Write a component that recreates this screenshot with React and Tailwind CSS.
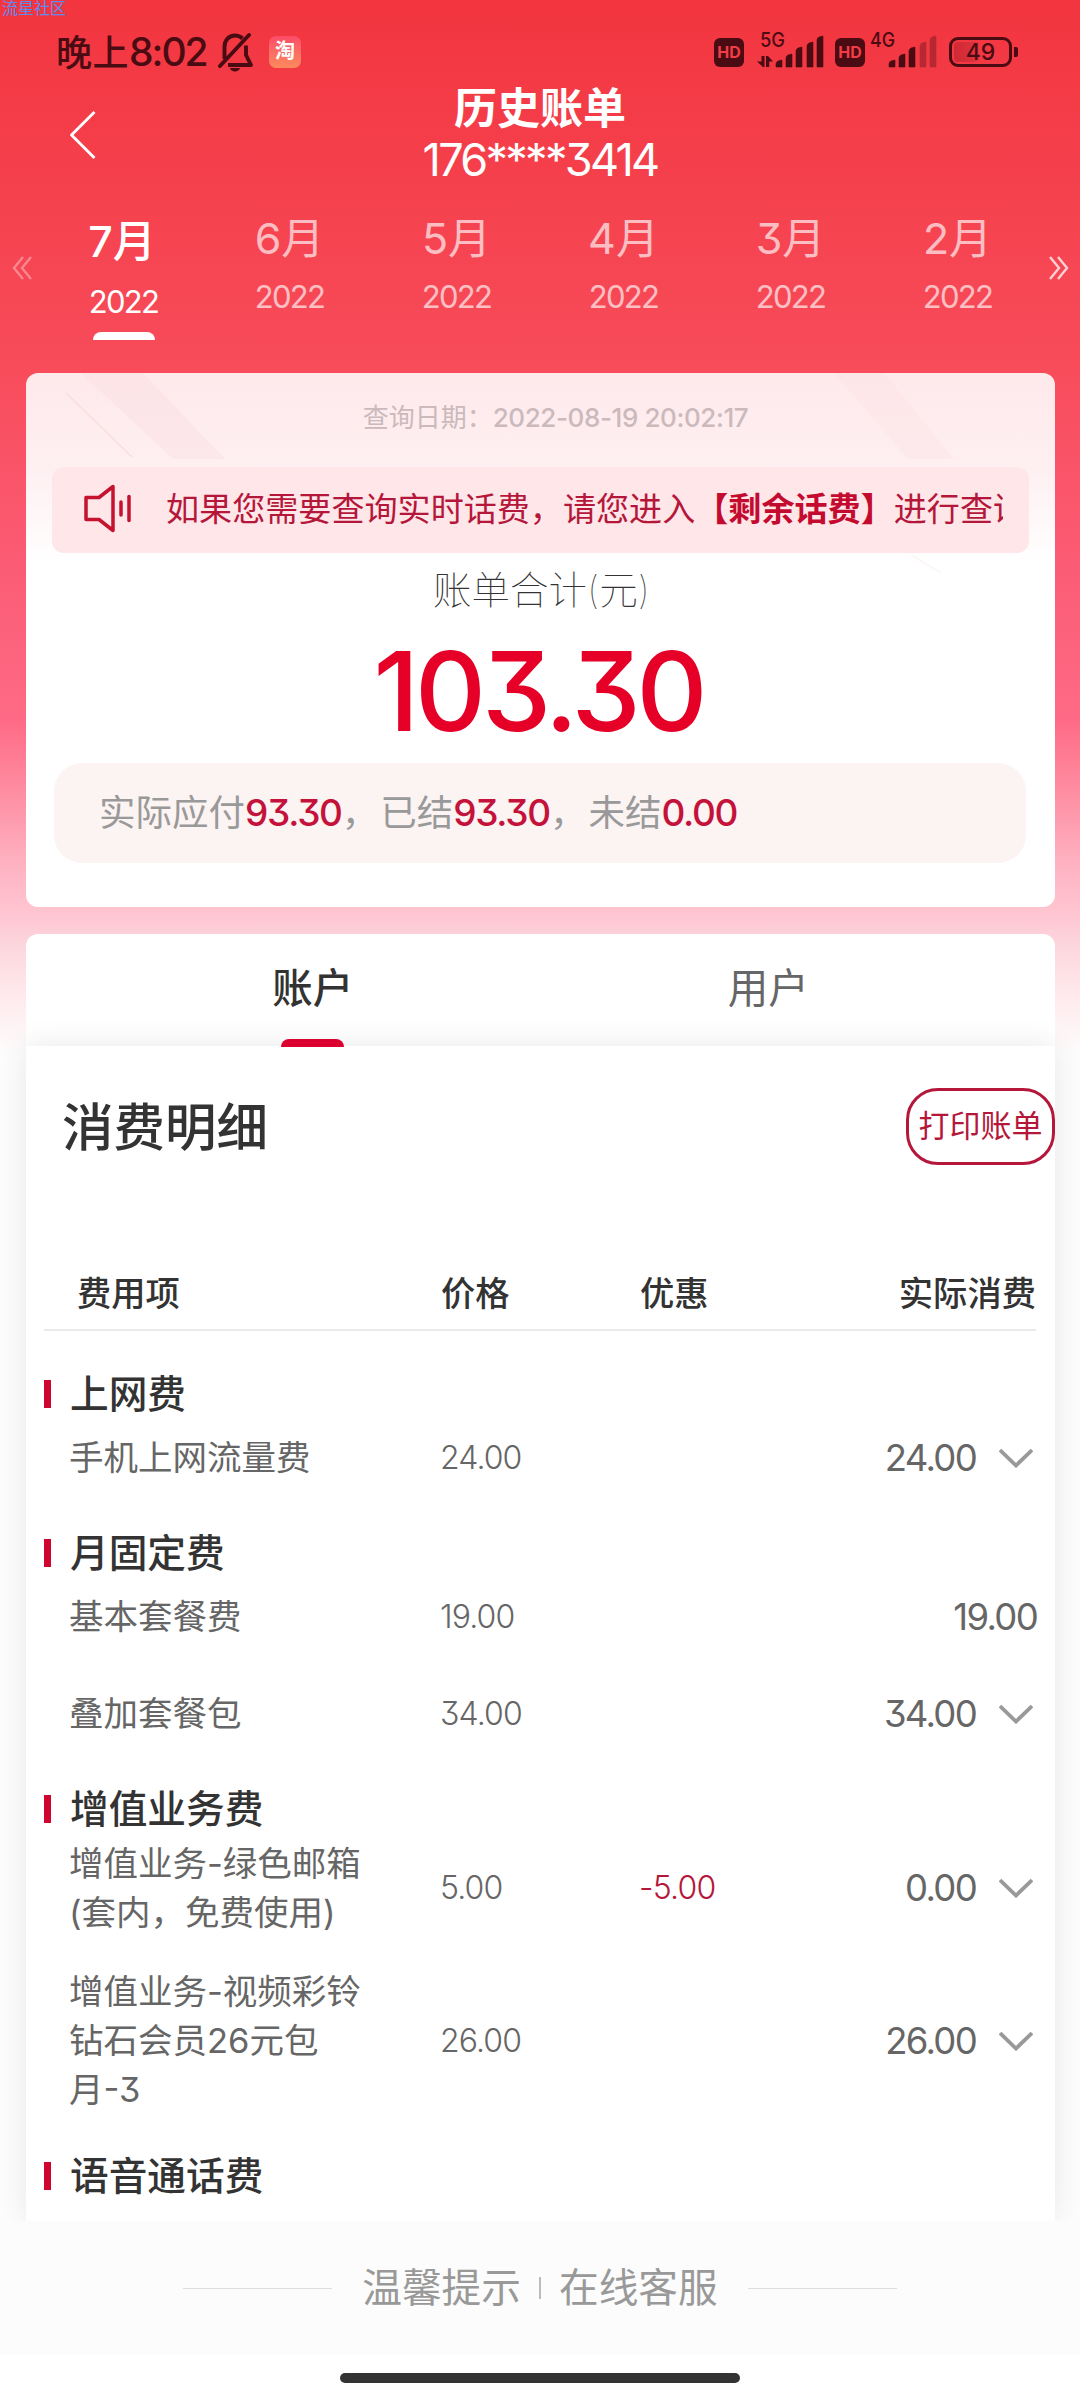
import { ChevronLeft } from 'lucide-react';

const months = [
    { month: '7月', year: '2022', active: true },
    { month: '6月', year: '2022' },
    { month: '5月', year: '2022' },
    { month: '4月', year: '2022' },
    { month: '3月', year: '2022' },
    { month: '2月', year: '2022' },
];

const sections = [
    {
        title: '上网费',
        items: [{ name: ['手机上网流量费'], price: '24.00', actual: '24.00', expandable: true }],
    },
    {
        title: '月固定费',
        items: [
            { name: ['基本套餐费'], price: '19.00', actual: '19.00' },
            { name: ['叠加套餐包'], price: '34.00', actual: '34.00', expandable: true },
        ],
    },
    {
        title: '增值业务费',
        items: [
            { name: ['增值业务-绿色邮箱', '(套内，免费使用)'], price: '5.00', discount: '-5.00', actual: '0.00', expandable: true },
            { name: ['增值业务-视频彩铃', '钻石会员26元包', '月-3'], price: '26.00', actual: '26.00', expandable: true },
        ],
    },
    { title: '语音通话费', items: [] },
];

function HdBadge() {
    return (
        <div className="w-[30px] h-[29px] rounded-[6px] bg-[#4a0b12] text-[#f23c46] text-[16px] font-bold leading-[29px] text-center">
            HD
        </div>
    );
}

function Signal({ label, level, arrows }) {
    const bars = [
        { x: 19, h: 7 },
        { x: 29, h: 13 },
        { x: 39, h: 20 },
        { x: 50, h: 25 },
        { x: 60, h: 31 },
    ];

    return (
        <svg className="w-[68px] h-[40px]" viewBox="0 0 68 40">
            <text x={arrows ? 3 : 0} y="19" fontSize="20" fontWeight="500" fill="#4a0b12" textLength="25" lengthAdjust="spacingAndGlyphs">
                {label}
            </text>
            {arrows && (
                <g fill="#4a0b12">
                    <path d="M4.5 28h3v11h-1.500L0 33.500h4.500z" />
                    <path d="M9 28h2l5 5.500h-3.800v5.500H9z" />
                </g>
            )}
            {bars.map((bar, i) => (
                <path
                    key={bar.x}
                    transform={`translate(${bar.x} 39)`}
                    d={`M0 0V-${bar.h - 4}Q0-${bar.h - 2} 2-${bar.h - 1}L6-${bar.h}V0Z`}
                    fill="#4a0b12"
                    stroke="#4a0b12"
                    strokeWidth="0.6"
                    strokeLinejoin="round"
                    opacity={i < level ? 1 : 0.35}
                />
            ))}
        </svg>
    );
}

function StatusBar() {
    return (
        <div className="h-[80px] pt-[32px] pl-[56px] flex items-start text-[#4a0b12]">
            <div className="h-[40px] w-[162px] whitespace-nowrap leading-[40px] font-medium">
                <span className="text-[36px] tracking-[0.500px]">晚上</span>
                <span className="text-[39px] tracking-[-2px]">8:02</span>
            </div>
            <svg className="w-[36px] h-[40px]" viewBox="0 0 36 40" fill="none" stroke="#4a0b12" strokeWidth="3.9">
                <path d="M2 34L31 3" strokeLinecap="round" />
                <path d="M6.500 27V15C6.500 8 11 3.500 17 3.500C20 3.500 22.500 4.500 24.500 6.500" />
                <path d="M28 13.500V23L33 33H10" strokeLinejoin="round" />
                <path d="M12 36h10c-.5 2-2.500 3.500-5 3.500s-4.500-1.500-5-3.500z" fill="#4a0b12" stroke="none" />
            </svg>
            <div className="mt-[4px] ml-[15px] w-[32px] h-[32px] rounded-[7px] bg-linear-to-b from-[#fb4a69] to-[#fc8a5c] text-white text-[20px] font-bold leading-[31px] text-center">
                淘
            </div>
            <div className="ml-auto mr-[62px] flex items-start">
                <div className="mt-[6px]"><HdBadge /></div>
                <div className="ml-[13px] -mt-[4px] flex"><Signal label="5G" level={5} arrows /></div>
                <div className="ml-[10px] mt-[6px]"><HdBadge /></div>
                <div className="ml-[5px] -mt-[4px] flex"><Signal label="4G" level={3} /></div>
                <div className="ml-[11px] mt-[5px] flex items-center">
                    <div className="w-[63px] h-[30px] p-[2px] border-[3px] border-[#4a0b12] rounded-[9px]">
                        <div className="h-[20px] rounded-[4px] bg-linear-to-r from-[#cf2a35] via-[#dc313c] via-35% to-transparent to-50% text-[23px] font-medium leading-[20px] text-center">
                            49
                        </div>
                    </div>
                    <div className="ml-[2px] w-[4px] h-[10px] rounded-r-[2px] bg-[#4a0b12]"></div>
                </div>
            </div>
        </div>
    );
}

function Header() {
    return (
        <div className="h-[120px] pt-[6px] text-white text-center relative">
            <ChevronLeft className="absolute left-[36px] top-[9px] w-[94px] h-[92px]" strokeWidth={0.75} strokeLinecap="butt" />
            <div className="h-[44px] text-[43px] leading-[44px] font-semibold">历史账单</div>
            <div className="h-[58px] text-[45px] leading-[60px] tracking-[-2.700px]">176****3414</div>
        </div>
    );
}

function DoubleChevron({ className }) {
    return (
        <svg className={className} viewBox="0 0 21 24" fill="none" stroke="currentColor" strokeWidth="2.4">
            <path d="M11 1L2 12l9 11M19 1l-9 11 9 11" />
        </svg>
    );
}

function MonthTabs() {
    return (
        <div className="h-[173px] flex text-white">
            <DoubleChevron className="w-[21px] h-[24px] mt-[56px] ml-[12px] mr-[7px] opacity-35" />
            {months.map((m) =>
                m.active ? (
                    <div key={m.month} className="w-[167px] flex flex-col items-center">
                        <div className="mt-[15px] -ml-[3px] text-[43px] leading-[52px] font-medium">{m.month}</div>
                        <div className="mt-[15px] text-[31px] leading-[40px] tracking-[-1.700px]">{m.year}</div>
                        <div className="mt-[10px] w-[62px] h-[8px] rounded-t-[8px] bg-white"></div>
                    </div>
                ) : (
                    <div key={m.month} className="w-[167px] flex flex-col items-center opacity-65">
                        <div className="mt-[12px] -ml-[2px] text-[43px] leading-[52px]">{m.month}</div>
                        <div className="mt-[13px] -ml-[2px] text-[31px] leading-[40px] tracking-[-1.700px]">{m.year}</div>
                    </div>
                )
            )}
            <DoubleChevron className="w-[21px] h-[24px] mt-[56px] ml-[6px] rotate-180 opacity-75" />
        </div>
    );
}

function SummaryCard() {
    return (
        <div className="ml-[26px] mr-[25px] h-[534px] rounded-[12px] bg-linear-to-b from-[#fee9eb] via-[#feeff1] via-17% to-white to-36% relative overflow-hidden">
            <svg className="absolute left-0 top-0 w-[1028px] h-[220px]" viewBox="0 0 1028 220">
                <path d="M55 0h62l82 86h-52z" fill="#fbdde1" opacity="0.4" />
                <path d="M40 20l66 64" stroke="#fadde0" strokeWidth="1.5" />
                <path d="M808 0h50l70 86h-46z" fill="#fbdde1" opacity="0.28" />
                <path d="M885 182l30 18" stroke="#fdf6f6" strokeWidth="2" />
            </svg>
            <div className="relative">
                <div className="pt-[22px] pl-[30px] text-[26px] leading-[46px] text-center text-[#cbb9bc] whitespace-nowrap">
                    查询日期：<span className="text-[26px] font-medium tracking-[-0.400px]">2022-08-19 20:02:17</span>
                </div>
                <div className="mt-[26px] mx-[26px] h-[86px] rounded-[12px] bg-[#fee6e9] flex items-center pr-[26px]">
                    <svg className="w-[50px] h-[50px] ml-[31px] -mt-[4px] flex-shrink-0" viewBox="0 0 50 50" fill="none" stroke="#c4122f" strokeWidth="3.500" strokeLinejoin="round" strokeLinecap="round">
                        <path d="M3 14.500h13L30 3.500v44L16 36.500H3z" />
                        <path d="M38 19v13" />
                        <path d="M46 13.500v24" />
                    </svg>
                    <div className="ml-[33px] -mt-[3px] flex-1 overflow-hidden whitespace-nowrap text-[33.100px] leading-[60px] text-[#b5173a]">
                        如果您需要查询实时话费，请您进入<b className="text-[#c40a2f]">【剩余话费】</b>进行查询
                    </div>
                </div>
                <div className="mt-[14px] pl-[2px] text-center text-[38.500px] leading-[46px] font-thin text-[#333]">账单合计(元)</div>
                <div className="mt-[18px] pr-[4px] text-center text-[110px] leading-[120px] font-medium text-[#e60027] tracking-[-4px]">103.30</div>
                <div className="mt-[12px] ml-[28px] mr-[29px] h-[100px] rounded-[28px] bg-[#fcf3f3] pl-[45px] text-[36.500px] leading-[99px] text-[#999] whitespace-nowrap">
                    实际应付<Amount value="93.30" />，<span className="ml-[2px]">已结</span><Amount value="93.30" />，<span className="ml-[2px]">未结</span><Amount value="0.00" />
                </div>
            </div>
        </div>
    );
}

function Amount({ value }) {
    return <span className="text-[37px] font-medium tracking-[-1.300px] text-[#c4123a]">{value}</span>;
}

function AccountTabs() {
    return (
        <div className="ml-[26px] mr-[25px] mt-[27px] h-[112px] rounded-t-[12px] bg-white px-[59px] flex text-[40.500px] leading-[56px] text-center">
            <div className="flex-1 pt-[27px] font-medium text-[#333] flex flex-col items-center">
                账户
                <div className="relative z-10 mt-[22px] w-[63px] h-[8px] flex-shrink-0 rounded-t-[8px] bg-[#dc0030]"></div>
            </div>
            <div className="flex-1 pt-[27px] text-[#666]">用户</div>
        </div>
    );
}

function FeeRow({ item }) {
    return (
        <div className="min-h-[97px] py-[15px] flex items-center text-[#666]">
            <div className="w-[371px] text-[34.500px] leading-[49px] whitespace-nowrap">
                {item.name.map((line) => (
                    <div key={line}>{line}</div>
                ))}
            </div>
            <div className="w-[199px] text-[32px] leading-[40px] font-light tracking-[-0.900px]">{item.price}</div>
            <div className="w-[200px] text-[32px] leading-[40px] font-light tracking-[-0.800px] text-[#b5173a]">{item.discount}</div>
            <div className="flex-1 flex justify-end items-center text-[36.500px] leading-[40px] tracking-[-1.700px]">
                <span>{item.actual}</span>
                {item.expandable && (
                    <svg className="w-[34px] h-[20px] ml-[23px] mr-[4px]" viewBox="0 0 34 20" fill="none" stroke="#999" strokeWidth="3.800">
                        <path d="M1 2l16 15.500L33 2" />
                    </svg>
                )}
            </div>
        </div>
    );
}

function Details() {
    return (
        <div className="ml-[26px] mr-[25px] h-[1175px] overflow-hidden bg-white shadow-[0_0_30px_rgba(0,0,0,0.09)]">
            <div className="pt-[42px] pl-[36px] flex items-center justify-between">
                <div className="text-[51.500px] leading-[60px] font-medium text-[#333]">消费明细</div>
                <div className="w-[149px] h-[77px] border-[3px] border-[#b5173a] rounded-[32px] text-[31px] leading-[70px] text-center text-[#b5173a] whitespace-nowrap">
                    打印账单
                </div>
            </div>
            <div className="mt-[94px] ml-[18px] mr-[19px] h-[72px] border-b-2 border-[#ebebeb] flex text-[34.300px] leading-[69px] font-medium text-[#333]">
                <div className="w-[397px] pl-[33px]">费用项</div>
                <div className="w-[199px]">价格</div>
                <div className="flex-1">优惠</div>
                <div className="whitespace-nowrap">实际消费</div>
            </div>
            <div className="mt-[15px] ml-[18px] mr-[18px]">
                {sections.map((section) => (
                    <div key={section.title}>
                        <div className="h-[62px] pt-[28px] flex items-start">
                            <div className="mt-[6px] w-[7px] h-[28px] bg-[#d0052f]"></div>
                            <div className="ml-[19px] text-[38.700px] leading-[40px] font-medium text-[#333]">{section.title}</div>
                        </div>
                        <div className="pl-[25px] relative top-px">
                            {section.items.map((item) => (
                                <FeeRow key={item.name[0]} item={item} />
                            ))}
                        </div>
                    </div>
                ))}
            </div>
        </div>
    );
}

function Footer() {
    return (
        <div className="relative bg-white">
            <div className="h-[134px] bg-[#fcfcfc] flex items-center justify-center text-[39.700px] text-[#999]">
                <div className="w-[149px] h-px mr-[30px] bg-[#ddd]"></div>
                <span className="pt-[2px]">温馨提示</span>
                <div className="w-[2px] h-[22px] mx-[18px] bg-[#bbb]"></div>
                <span className="pt-[2px]">在线客服</span>
                <div className="w-[149px] h-px ml-[30px] bg-[#ddd]"></div>
            </div>
            <div className="h-[45px] pt-[18px]">
                <div className="mx-auto w-[400px] h-[10px] rounded-full bg-[#333]"></div>
            </div>
        </div>
    );
}

export default function App() {
    return (
        <div className="w-[1080px] h-[2400px] overflow-hidden relative font-['Inter','Noto_Sans_CJK_SC',sans-serif] [font-feature-settings:'cv09'] bg-[linear-gradient(180deg,#f2353f_0px,#f84c5b_370px,#fb5b74_560px,#fe6a85_720px,#fe8ca1_790px,#feb0c0_860px,#ffc6d2_915px,#fcd6dd_945px,#ffebee_1000px,#fdfdfd_1055px)]">
            <div className="absolute left-[2px] top-0 text-[16px] leading-[17px] text-[#5b8def]">流星社区</div>
            <StatusBar />
            <Header />
            <MonthTabs />
            <SummaryCard />
            <AccountTabs />
            <Details />
            <Footer />
        </div>
    );
}
